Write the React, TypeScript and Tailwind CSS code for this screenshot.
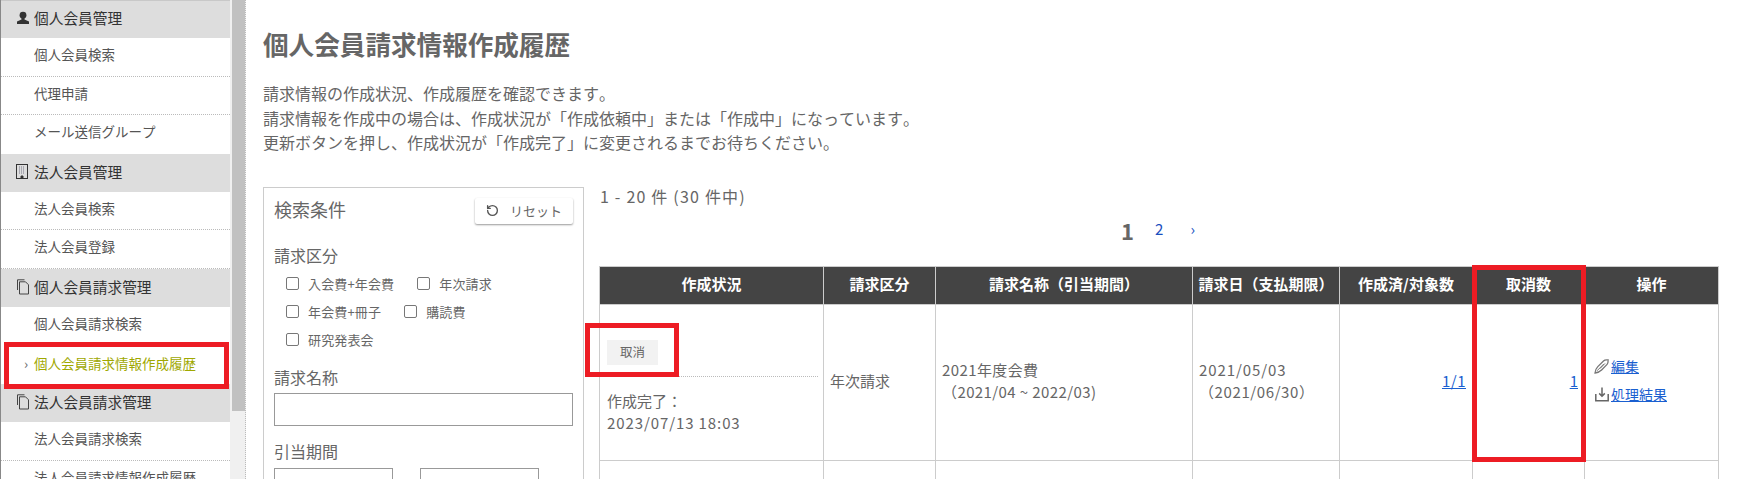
import type { ReactNode } from 'react';
import { RotateCw } from 'lucide-react';

function UserIcon() {
  return (
    <svg width="14" height="14" viewBox="0 0 14 14" className="shrink-0" fill="#333">
      <circle cx="7" cy="4.2" r="3.4" />
      <path d="M5.5 7h3v1.4l4.5 2V13H1v-2.6l4.5-2z" />
    </svg>
  );
}

function BuildingIcon() {
  return (
    <svg width="13" height="16" viewBox="0 0 13 16" className="shrink-0" fill="none" stroke="#333">
      <rect x="0.5" y="0.5" width="11" height="14" />
      <path d="M3 3h6M3 5h6M3 7h6M3 9h6" stroke="#778" strokeDasharray="1 1" />
      <path d="M5 14v-2h2v2" fill="#333" />
    </svg>
  );
}

function PagesIcon() {
  return (
    <svg width="14" height="16" viewBox="0 0 14 16" className="shrink-0" fill="none" stroke="#444">
      <path d="M1.5 11V.8h7" />
      <path d="M3.5 15V2.8h6l3 3V15z" />
    </svg>
  );
}

function EditIcon() {
  return (
    <svg width="16" height="15" viewBox="0 0 16 15" className="shrink-0" fill="none" stroke="#777" strokeWidth="1.3">
      <path d="M1 14c.2-2.6 1-4.6 2.8-6.4L9.5 2c1.6-1.6 3.6-1 4.6-1-.2 1.4.4 3-1 4.4L7.6 11c-1.8 1.8-3.8 2.6-6.6 3z" />
      <path d="M3 11.8L9.8 5M6 9.6L11 4.4" strokeWidth="1" />
    </svg>
  );
}

function DownloadIcon() {
  return (
    <svg width="16" height="15" viewBox="0 0 16 15" className="shrink-0" fill="none" stroke="#666" strokeWidth="1.5">
      <path d="M1.8 7v6.8h12.4V7" />
      <path d="M8 .5v8.3M5.2 6.4L8 9.2l2.8-2.8" />
    </svg>
  );
}

function SideHeader({ icon, label }: { icon: ReactNode; label: string }) {
  return (
    <div className="flex h-[38.4px] items-center bg-[#dddddd] pb-[2px] pl-[15px] text-[14.7px] text-[#333] first:shadow-[inset_0_1px_0_#c8c8c8]">
      <span className="flex w-[18px] items-center">{icon}</span>
      {label}
    </div>
  );
}

function SideItem({ label, active, last }: { label: string; active?: boolean; last?: boolean }) {
  return (
    <div
      className={`flex h-[38.4px] items-center text-[13.5px] ${active ? 'pb-[3px] pl-[23px] text-[#a0a800]' : 'pl-[33px] text-[#555]'} ${!active && last ? 'pb-[7px]' : ''} ${!active && !last ? 'pb-[5px]' : ''} ${last ? '' : 'border-b border-dotted border-[#bbb]'}`}
    >
      {active && <span className="w-[10px] text-[#666]">›</span>}
      {label}
    </div>
  );
}

function Sidebar() {
  return (
    <aside className="h-[479px] w-[230px] shrink-0 overflow-hidden border-l border-[#888] bg-white">
      <SideHeader icon={<UserIcon />} label="個人会員管理" />
      <SideItem label="個人会員検索" />
      <SideItem label="代理申請" />
      <SideItem label="メール送信グループ" last />
      <SideHeader icon={<BuildingIcon />} label="法人会員管理" />
      <SideItem label="法人会員検索" />
      <SideItem label="法人会員登録" />
      <SideHeader icon={<PagesIcon />} label="個人会員請求管理" />
      <SideItem label="個人会員請求検索" last />
      <SideItem label="個人会員請求情報作成履歴" active last />
      <SideHeader icon={<PagesIcon />} label="法人会員請求管理" />
      <SideItem label="法人会員請求検索" />
      <SideItem label="法人会員請求情報作成履歴" />
    </aside>
  );
}

function Check({ label }: { label: string }) {
  return (
    <label className="flex items-center gap-[9px] text-[13px] leading-[16px] tracking-[0.15px]">
      <span className="h-[13px] w-[13px] rounded-[2px] border border-[#777] bg-white" />
      {label}
    </label>
  );
}

function FilterPanel() {
  return (
    <div className="h-[293px] w-[321px] shrink-0 border border-[#ccc] px-[10px] pt-[10px] text-[#666]">
      <div className="flex items-start justify-between">
        <span className="text-[18px] leading-[22px]">検索条件</span>
        <button className="flex h-[26px] w-[98px] items-center justify-center gap-[11px] rounded-[2px] bg-white text-[13px] shadow-[0_1px_2px_rgba(0,0,0,0.4)]">
          <RotateCw size={13} strokeWidth={2.5} className="-scale-x-100 text-[#555]" />
          リセット
        </button>
      </div>
      <div className="mt-[19px] text-[16px] leading-[24px]">請求区分</div>
      <div className="mt-[9px] flex flex-col gap-[12px] pl-[12px]">
        <div className="flex gap-[23px]">
          <Check label="入会費+年会費" />
          <Check label="年次請求" />
        </div>
        <div className="flex gap-[23px]">
          <Check label="年会費+冊子" />
          <Check label="購読費" />
        </div>
        <Check label="研究発表会" />
      </div>
      <div className="mt-[17px] text-[16px] leading-[24px]">請求名称</div>
      <div className="mt-[4px] h-[33px] border border-[#999]" />
      <div className="mt-[13px] text-[16px] leading-[24px]">引当期間</div>
      <div className="mt-[5px] flex gap-[27px]">
        <div className="h-[33px] w-[119px] border border-[#999]" />
        <div className="h-[33px] w-[119px] border border-[#999]" />
      </div>
    </div>
  );
}

function HeadCell({ label, width }: { label: string; width: string }) {
  return (
    <th className={`${width} h-[38px] border border-[#ccc] bg-[#444] p-0 pb-[1px] text-center text-[15px] font-bold text-white`}>
      {label}
    </th>
  );
}

function ResultsTable() {
  return (
    <table className="w-[1119px] table-fixed border-collapse text-[15px] text-[#666]">
      <thead>
        <tr>
          <HeadCell label="作成状況" width="w-[224px]" />
          <HeadCell label="請求区分" width="w-[112px]" />
          <HeadCell label="請求名称（引当期間）" width="w-[257px]" />
          <HeadCell label="請求日（支払期限）" width="w-[147px]" />
          <HeadCell label="作成済/対象数" width="w-[133px]" />
          <HeadCell label="取消数" width="w-[112px]" />
          <HeadCell label="操作" width="w-[134px]" />
        </tr>
      </thead>
      <tbody>
        <tr className="h-[156px]">
          <td className="border border-[#ccc] px-[5px] align-top">
            <div className="border-b border-dotted border-[#bbb] pt-[35px] pb-[11px] pl-[2px]">
              <span className="flex h-[25px] w-[51px] items-center justify-center bg-[#f2f2f2] text-[12.5px]">取消</span>
            </div>
            <div className="pt-[13px] pl-[2px] leading-[22px]">
              作成完了：
              <br />
              <span className="tracking-[0.9px]">2023/07/13 18:03</span>
            </div>
          </td>
          <td className="border border-[#ccc] px-[6px] pb-[2px]">年次請求</td>
          <td className="border border-[#ccc] px-[6px] pb-[3px] leading-[22px]">
            <span className="tracking-[0.4px]">2021年度会費</span>
            <br />
            <span className="tracking-[0.4px]">（2021/04 ~ 2022/03)</span>
          </td>
          <td className="border border-[#ccc] px-[6px] pb-[3px] leading-[22px]">
            <span className="tracking-[0.9px]">2021/05/03</span>
            <br />
            <span className="tracking-[0.6px]">（2021/06/30）</span>
          </td>
          <td className="border border-[#ccc] px-[6px] pb-[2px] text-right">
            <a className="tracking-[0.5px] text-[#1a5fd0] underline">1/1</a>
          </td>
          <td className="border border-[#ccc] px-[6px] pb-[2px] text-right">
            <a className="text-[#1a5fd0] underline">1</a>
          </td>
          <td className="border border-[#ccc] px-[9px] pb-[4px] text-[14px] leading-[28px]">
            <div className="flex items-center gap-[1px]">
              <EditIcon />
              <a className="text-[#1a5fd0] underline">編集</a>
            </div>
            <div className="flex items-center gap-[1px]">
              <DownloadIcon />
              <a className="text-[#1a5fd0] underline">処理結果</a>
            </div>
          </td>
        </tr>
        <tr className="h-[40px]">
          <td className="border border-[#ccc]" />
          <td className="border border-[#ccc]" />
          <td className="border border-[#ccc]" />
          <td className="border border-[#ccc]" />
          <td className="border border-[#ccc]" />
          <td className="border border-[#ccc]" />
          <td className="border border-[#ccc]" />
        </tr>
      </tbody>
    </table>
  );
}

export default function App() {
  return (
    <div className="relative flex h-[479px] w-[1737px] overflow-hidden bg-white font-['Noto_Sans_CJK_JP','Noto_Sans',sans-serif] [font-kerning:none] [text-spacing-trim:space-all]">
      <Sidebar />
      {/* scrollbar */}
      <div className="h-[479px] w-[16px] shrink-0 border-r border-dotted border-[#bbb] bg-[#f0f0f0]">
        <div className="ml-[2px] h-[411px] w-[13px] bg-[#c1c1c1]" />
      </div>
      <main className="min-w-0 flex-1 pl-[17px] text-[#666]">
        <h1 className="mt-[26px] text-[25.6px] leading-[36px] font-bold text-[#666]">個人会員請求情報作成履歴</h1>
        <div className="mt-[19px] text-[16px] leading-[24.5px]">
          <p>請求情報の作成状況、作成履歴を確認できます。</p>
          <p>請求情報を作成中の場合は、作成状況が「作成依頼中」または「作成中」になっています。</p>
          <p>更新ボタンを押し、作成状況が「作成完了」に変更されるまでお待ちください。</p>
        </div>
        <div className="mt-[32px] flex gap-[15px]">
          <FilterPanel />
          <div className="min-w-0 flex-1">
            <div className="-mt-[3px] pl-[1px] text-[16px] leading-[24px] tracking-[1.2px]">1 - 20 件 (30 件中)</div>
            <div className="mt-[7px] flex items-center justify-center pr-[20px]">
              <span className="mr-[21px] text-[22px] leading-[30px] font-bold">1</span>
              <span className="mr-[27px] text-[15px] text-[#1a4fc0]">2</span>
              <span className="text-[15px] text-[#1a4fc0]">›</span>
            </div>
            <div className="mt-[21px]">
              <ResultsTable />
            </div>
          </div>
        </div>
      </main>
      {/* red callouts drawn over the screenshot */}
      <div className="absolute top-[342px] left-[4px] h-[47px] w-[225px] border-[5px] border-[#ed1c24]" />
      <div className="absolute top-[323px] left-[585px] h-[54px] w-[94px] border-[5px] border-[#ed1c24]" />
      <div className="absolute top-[265px] left-[1472px] h-[197px] w-[114px] border-[5px] border-[#ed1c24]" />
    </div>
  );
}
